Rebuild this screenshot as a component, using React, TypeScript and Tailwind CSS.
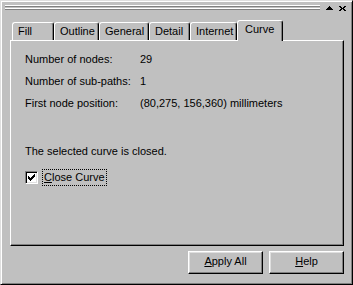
const font = "font-['Liberation_Sans',Arial,sans-serif] text-[11px] leading-[13px] text-black"

const tabs = [
  { label: 'Fill', w: 'w-[42px]' },
  { label: 'Outline', w: 'w-[45px]' },
  { label: 'General', w: 'w-[50px]' },
  { label: 'Detail', w: 'w-[41px]' },
  { label: 'Internet', w: 'w-[47px]' },
]

const rows = [
  { label: 'Number of nodes:', value: '29' },
  { label: 'Number of sub-paths:', value: '1' },
  { label: 'First node position:', value: '(80,275, 156,360) millimeters' },
]

function CheckMark() {
  return (
    <svg width="7" height="7" viewBox="0 0 7 7" shapeRendering="crispEdges" aria-hidden="true">
      <rect x="6" y="0" width="1" height="1" fill="#000" />
      <rect x="5" y="1" width="2" height="1" fill="#000" />
      <rect x="0" y="2" width="1" height="1" fill="#000" />
      <rect x="4" y="2" width="3" height="1" fill="#000" />
      <rect x="0" y="3" width="2" height="1" fill="#000" />
      <rect x="3" y="3" width="3" height="1" fill="#000" />
      <rect x="0" y="4" width="5" height="1" fill="#000" />
      <rect x="1" y="5" width="3" height="1" fill="#000" />
      <rect x="2" y="6" width="1" height="1" fill="#000" />
    </svg>
  )
}

function Button({ mnemonic, rest }: { mnemonic: string; rest: string }) {
  return (
    <button
      type="button"
      className="flex h-[23px] w-[75px] items-center justify-center border border-t-white border-l-white border-r-black border-b-black bg-[#c0c0c0] pb-[2px] shadow-[inset_-1px_-1px_#808080,inset_1px_1px_#dfdfdf]"
    >
      <span>
        <span className="underline underline-offset-[1px]">{mnemonic}</span>
        {rest}
      </span>
    </button>
  )
}

export default function App() {
  return (
    <div
      className={`flex h-[285px] w-[353px] flex-col border border-t-[#dfdfdf] border-l-[#dfdfdf] border-r-black border-b-black bg-[#c0c0c0] shadow-[inset_1px_1px_#fff,inset_-1px_-1px_#808080] ${font}`}
    >
      {/* Roll-up title bar: grip lines, collapse arrow, close */}
      <div className="flex h-[19px] items-start pl-[4px] pt-[4px]">
        <div className="flex w-[315px] flex-col gap-[1px]">
          <div className="h-[2px] border-t border-t-white border-b border-b-[#808080]" />
          <div className="h-[2px] border-t border-t-white border-b border-b-[#808080]" />
        </div>
        <svg className="ml-[6px] mt-[1px]" width="7" height="4" viewBox="0 0 7 4" shapeRendering="crispEdges" aria-hidden="true">
          <path d="M3 0h1v1h1v1h1v1h1v1H0V3h1V2h1V1h1z" fill="#000" />
        </svg>
        <svg className="ml-[6px] mt-[1px]" width="7" height="5" viewBox="0 0 7 5" shapeRendering="crispEdges" aria-hidden="true">
          <path d="M0 0h2v1h1v1h1V1h1V0h2v1H6v1H5v1h1v1h1v1H5V4H4V3H3v1H2v1H0V4h1V3h1V2H1V1H0z" fill="#000" />
        </svg>
      </div>

      {/* Tabs + panel */}
      <div className="flex flex-col pl-[9px] pr-[8px]">
        <div className="flex h-[21px] items-start pl-[2px]">
          {tabs.map((t) => (
            <div
              key={t.label}
              className={`mt-[2px] h-[19px] ${t.w} rounded-t-[3px] border-t border-l border-r border-t-white border-l-white border-r-black pl-[5px] pt-[2px] shadow-[inset_-1px_0_#808080]`}
            >
              {t.label}
            </div>
          ))}
          <div className="relative z-10 h-[21px] w-[46px] rounded-t-[3px] border-t border-l border-r border-t-white border-l-white border-r-black bg-[#c0c0c0] pl-[7px] pt-[2px] shadow-[inset_-1px_0_#808080]">
            Curve
          </div>
        </div>

        <div className="-mt-px flex h-[206px] flex-col border border-t-white border-l-white border-r-black border-b-black pl-[14px] pt-[12px] shadow-[inset_-1px_-1px_#808080]">
          <div className="flex flex-col gap-[9px]">
            {rows.map((r) => (
              <div key={r.label} className="flex">
                <div className="w-[115px]">{r.label}</div>
                <div>{r.value}</div>
              </div>
            ))}
          </div>
          <div className="mt-[35px]">The selected curve is closed.</div>
          <div className="mt-[11px] flex h-[17px] items-center">
            <div className="flex h-[13px] w-[13px] items-center justify-center border border-t-[#808080] border-l-[#808080] border-r-white border-b-white bg-white shadow-[inset_1px_1px_#000,inset_-1px_-1px_#dfdfdf]">
              <CheckMark />
            </div>
            <div className="ml-[4px] h-[17px] border border-dotted border-black pl-[1px] pr-[1px] pt-[1px]">
              <span className="underline underline-offset-[1px]">C</span>lose Curve
            </div>
          </div>
        </div>

        <div className="mt-[5px] flex justify-end gap-[6px]">
          <Button mnemonic="A" rest="pply All" />
          <Button mnemonic="H" rest="elp" />
        </div>
      </div>
    </div>
  )
}
